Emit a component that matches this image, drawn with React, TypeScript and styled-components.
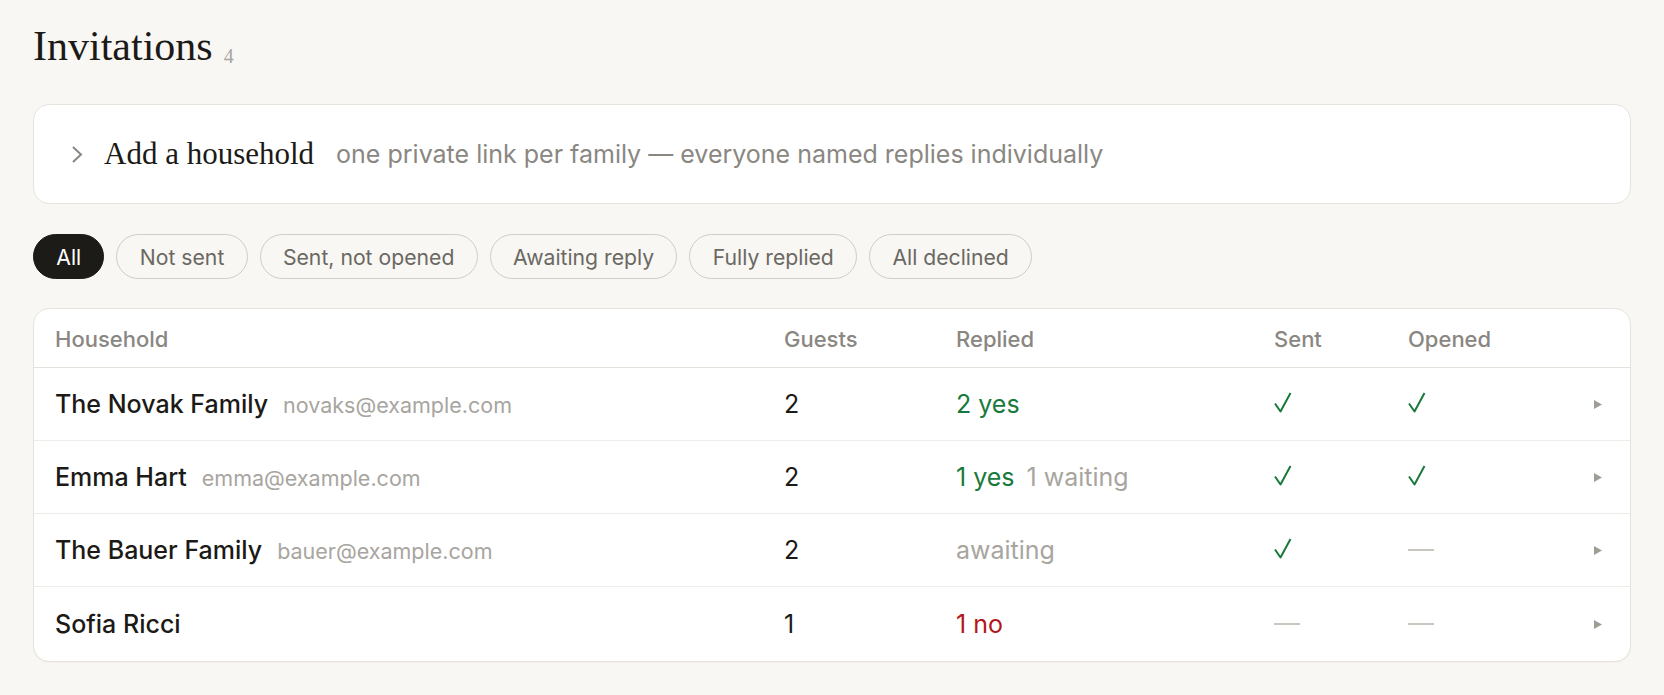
import styled, { createGlobalStyle } from "styled-components";
import { useState } from "react";

type Status = "yes" | "no" | "waiting";

type Household = {
  name: string;
  email?: string;
  guests: number;
  replies: { status: Status; text: string }[];
  sent: boolean;
  opened: boolean;
};

const households: Household[] = [
  { name: "The Novak Family", email: "novaks@example.com", guests: 2, replies: [{ status: "yes", text: "2 yes" }], sent: true, opened: true },
  {
    name: "Emma Hart",
    email: "emma@example.com",
    guests: 2,
    replies: [
      { status: "yes", text: "1 yes" },
      { status: "waiting", text: "1 waiting" },
    ],
    sent: true,
    opened: true,
  },
  { name: "The Bauer Family", email: "bauer@example.com", guests: 2, replies: [{ status: "waiting", text: "awaiting" }], sent: true, opened: false },
  { name: "Sofia Ricci", guests: 1, replies: [{ status: "no", text: "1 no" }], sent: false, opened: false },
];

const filters = ["All", "Not sent", "Sent, not opened", "Awaiting reply", "Fully replied", "All declined"];

const GlobalStyle = createGlobalStyle`
  html, body {
    margin: 0;
    background: #f8f7f4;
  }
  body {
    font-family: Inter, "Noto Sans", sans-serif;
    color: #1c1a17;
  }
`;

const Page = styled.div`
  padding: 22px 33px 34px;
  display: flex;
  flex-direction: column;
`;

const Heading = styled.h1`
  margin: 0;
  display: flex;
  align-items: baseline;
  gap: 11px;
  font-family: "Liberation Serif", serif;
  font-weight: 400;
  font-size: 42px;
  line-height: 48px;
  color: #1c1a17;
`;

const Count = styled.span`
  font-size: 20px;
  color: #a8a59f;
  transform: translateY(3px);
`;

const AddCard = styled.div`
  margin-top: 27px;
  height: 100px;
  box-sizing: border-box;
  display: flex;
  align-items: center;
  padding: 0 37px;
  background: #fff;
  border: 1px solid #e6e3dd;
  border-radius: 16px;
  cursor: pointer;
`;

const Chevron = styled.svg`
  flex: none;
  margin-right: 20px;
`;

const AddTitle = styled.span`
  font-family: "Liberation Serif", serif;
  font-size: 31px;
  color: #1c1a17;
  margin-right: 22px;
`;

const AddHint = styled.span`
  font-size: 25px;
  color: #8a8782;
`;

const FilterRow = styled.div`
  margin-top: 30px;
  display: flex;
  gap: 12px;
`;

const Pill = styled.button<{ active: boolean }>`
  height: 45px;
  padding: 0 22.3px;
  border-radius: 999px;
  font-family: Inter, sans-serif;
  font-size: 21.2px;
  border: 1.5px solid ${({ active }) => (active ? "#1d1b18" : "#d0cdc6")};
  background: ${({ active }) => (active ? "#1d1b18" : "transparent")};
  color: ${({ active }) => (active ? "#ffffff" : "#6b6862")};
  cursor: pointer;
`;

const Table = styled.div`
  margin-top: 29px;
  background: #fff;
  border: 1px solid #e6e3dd;
  border-radius: 16px;
  overflow: hidden;
  box-shadow: 0 1px 1px rgba(0, 0, 0, 0.03);
`;

const Row = styled.div<{ header?: boolean }>`
  display: grid;
  grid-template-columns: 729px 172px 318px 134px 1fr 20px;
  align-items: center;
  height: ${({ header }) => (header ? "57px" : "72px")};
  padding: 0 28px 0 21px;
  border-top: 1px solid ${({ header }) => (header ? "transparent" : "#eeece8")};
  &:nth-child(2) {
    border-top-color: #e4e2dd;
  }
  &:last-child {
    height: 74px;
  }
`;

const HeadCell = styled.div`
  font-size: 22px;
  font-weight: 500;
  color: #8a8782;
`;

const NameCell = styled.div`
  display: flex;
  align-items: baseline;
  gap: 15px;
`;

const Name = styled.span`
  font-size: 25px;
  font-weight: 500;
  color: #1c1a17;
`;

const Email = styled.span`
  font-size: 21.5px;
  color: #a8a59f;
`;

const Number = styled.div`
  font-size: 25px;
  color: #1c1a17;
`;

const Replies = styled.div`
  display: flex;
  gap: 12px;
`;

const Reply = styled.span<{ status: Status }>`
  font-size: 25px;
  color: ${({ status }) => (status === "yes" ? "#177a3c" : status === "no" ? "#b3161b" : "#a8a59f")};
`;

const Dash = styled.span`
  display: block;
  width: 26px;
  height: 2px;
  background: #c9c6c0;
`;

const ArrowCell = styled.div`
  display: flex;
  justify-content: flex-end;
`;

const Check = () => (
  <svg width="18" height="21" viewBox="0 0 18 21">
    <polyline points="1,11.5 6.5,19.5 16.5,1" fill="none" stroke="#177a3c" strokeWidth="2" strokeLinejoin="round" />
  </svg>
);

const Mark = ({ on }: { on: boolean }) => <div>{on ? <Check /> : <Dash />}</div>;

const App = () => {
  const [active, setActive] = useState("All");
  return (
    <Page>
      <GlobalStyle />
      <Heading>
        Invitations <Count>4</Count>
      </Heading>
      <AddCard>
        <Chevron width="13" height="19" viewBox="0 0 13 19">
          <polyline points="2,2 10,9.5 2,17" fill="none" stroke="#8a8782" strokeWidth="2" />
        </Chevron>
        <AddTitle>Add a household</AddTitle>
        <AddHint>one private link per family — everyone named replies individually</AddHint>
      </AddCard>
      <FilterRow>
        {filters.map((f) => (
          <Pill key={f} active={f === active} onClick={() => setActive(f)}>
            {f}
          </Pill>
        ))}
      </FilterRow>
      <Table>
        <Row header>
          <HeadCell>Household</HeadCell>
          <HeadCell>Guests</HeadCell>
          <HeadCell>Replied</HeadCell>
          <HeadCell>Sent</HeadCell>
          <HeadCell>Opened</HeadCell>
          <div />
        </Row>
        {households.map((h) => (
          <Row key={h.name}>
            <NameCell>
              <Name>{h.name}</Name>
              {h.email ? <Email>{h.email}</Email> : null}
            </NameCell>
            <Number>{h.guests}</Number>
            <Replies>
              {h.replies.map((r) => (
                <Reply key={r.text} status={r.status}>
                  {r.text}
                </Reply>
              ))}
            </Replies>
            <Mark on={h.sent} />
            <Mark on={h.opened} />
            <ArrowCell>
              <svg width="8" height="9" viewBox="0 0 8 9">
                <polygon points="0,0 8,4.5 0,9" fill="#a09d97" />
              </svg>
            </ArrowCell>
          </Row>
        ))}
      </Table>
    </Page>
  );
};

export default App;
